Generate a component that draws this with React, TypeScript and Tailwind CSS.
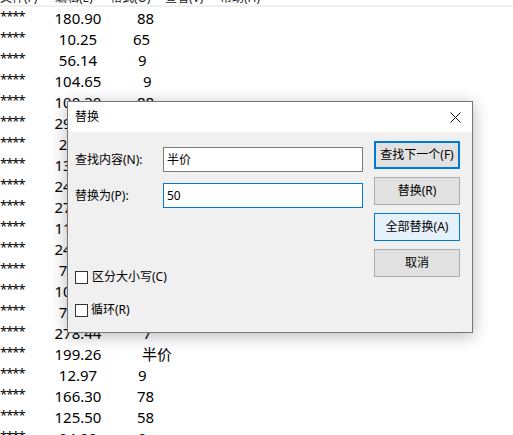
import React from "react";

type Row = { a: string; n: string; q: string; qc: string };

const rows: Row[] = [
  { a: "****", n: "180.90", q: "88", qc: "ml-[21px]" },
  { a: "****", n: "10.25", q: "65", qc: "ml-[17px]" },
  { a: "****", n: "56.14", q: "9", qc: "ml-[22px]" },
  { a: "****", n: "104.65", q: "9", qc: "ml-[27px]" },
  { a: "****", n: "100.30", q: "88", qc: "ml-[21px]" },
  { a: "****", n: "293.50", q: "12", qc: "ml-[21px]" },
  { a: "****", n: "25.80", q: "9", qc: "ml-[22px]" },
  { a: "****", n: "134.20", q: "45", qc: "ml-[21px]" },
  { a: "****", n: "246.00", q: "9", qc: "ml-[22px]" },
  { a: "****", n: "271.90", q: "36", qc: "ml-[21px]" },
  { a: "****", n: "118.60", q: "9", qc: "ml-[22px]" },
  { a: "****", n: "245.30", q: "27", qc: "ml-[21px]" },
  { a: "****", n: "75.40", q: "9", qc: "ml-[22px]" },
  { a: "****", n: "109.80", q: "64", qc: "ml-[21px]" },
  { a: "****", n: "72.60", q: "9", qc: "ml-[22px]" },
  { a: "****", n: "278.44", q: "7", qc: "ml-[27px]" },
  { a: "****", n: "199.26", q: "半价", qc: "ml-[26px]" },
  { a: "****", n: "12.97", q: "9", qc: "ml-[22px]" },
  { a: "****", n: "166.30", q: "78", qc: "ml-[21px]" },
  { a: "****", n: "125.50", q: "58", qc: "ml-[21px]" },
  { a: "****", n: "94.00", q: "9", qc: "ml-[22px]" },
];

const menu = ["文件(F)", "编辑(E)", "格式(O)", "查看(V)", "帮助(H)"];

const font = { fontFamily: '"Noto Sans", "Noto Sans CJK SC", sans-serif' };

export default function App() {
  return (
    <div
      className="relative w-[513px] h-[435px] overflow-hidden bg-white text-black"
      style={font}
    >
      {/* menu bar, cut off */}
      <div className="h-[5px] overflow-hidden">
        <div className="flex -mt-[9px] text-[12px] leading-[14px] text-[#222]">
          {menu.map((m) => (
            <span key={m} className="w-[55px] shrink-0">
              {m}
            </span>
          ))}
        </div>
      </div>
      <div className="h-[2px] bg-[#f0f0f0]" />

      {/* text content */}
      <div className="pt-[1px]">
        {rows.map((r, i) => (
          <div key={i} className="flex h-[21px] items-center text-[15px] leading-[21px]">
            <span className="w-[40px] shrink-0 self-start text-[13px] leading-[17px] tracking-[-1px]">
              {r.a}
            </span>
            <span className="w-[76px] shrink-0 text-center">{r.n}</span>
            <span className={r.qc}>{r.q}</span>
          </div>
        ))}
      </div>

      {/* dialog */}
      <div className="absolute left-[67px] top-[101px] w-[406px] h-[232px] border border-[#767676] bg-[#f0f0f0] shadow-[0_3px_16px_rgba(0,0,0,0.28)] flex flex-col text-[12px]">
        <div className="h-[30px] bg-white flex items-center justify-between pl-[7px] pr-[10px]">
          <span className="text-[12px]">替换</span>
          <svg width="11" height="11" viewBox="0 0 11 11" className="mr-[1px]">
            <path d="M0.5 0.5 L10.5 10.5 M10.5 0.5 L0.5 10.5" stroke="#111" strokeWidth="1" fill="none" />
          </svg>
        </div>
        <div className="flex flex-1 pl-[7px]">
          <div className="flex flex-col w-[295px]">
            <div className="flex items-center mt-[15px]">
              <span className="w-[88px] shrink-0">查找内容(N):</span>
              <div className="w-[200px] h-[25px] border border-[#7a7a7a] bg-white flex items-center pl-[3px] text-[12px]">
                半价
              </div>
            </div>
            <div className="flex items-center mt-[11px]">
              <span className="w-[88px] shrink-0">替换为(P):</span>
              <div className="w-[200px] h-[25px] border border-[#0078d7] bg-white flex items-center pl-[3px] text-[12px]">
                50
              </div>
            </div>
            <div className="flex items-center h-[20px] mt-[59px]">
              <span className="w-[13px] h-[13px] border border-[#333] bg-white shrink-0" />
              <span className="ml-[4px]">区分大小写(C)</span>
            </div>
            <div className="flex items-center h-[20px] mt-[13px]">
              <span className="w-[13px] h-[13px] border border-[#333] bg-white shrink-0" />
              <span className="ml-[3px]">循环(R)</span>
            </div>
          </div>
          <div className="flex flex-col gap-[8px] pt-[9px] ml-[4px]">
            <div className="w-[86px] h-[28px] border-2 border-[#0078d7] bg-[#e1e1e1] flex items-center justify-center">
              查找下一个(F)
            </div>
            <div className="w-[86px] h-[28px] border border-[#adadad] bg-[#e1e1e1] flex items-center justify-center">
              替换(R)
            </div>
            <div className="w-[86px] h-[28px] border border-[#0078d7] bg-[#e5f1fb] flex items-center justify-center">
              全部替换(A)
            </div>
            <div className="w-[86px] h-[28px] border border-[#adadad] bg-[#e1e1e1] flex items-center justify-center">
              取消
            </div>
          </div>
        </div>
      </div>
    </div>
  );
}
